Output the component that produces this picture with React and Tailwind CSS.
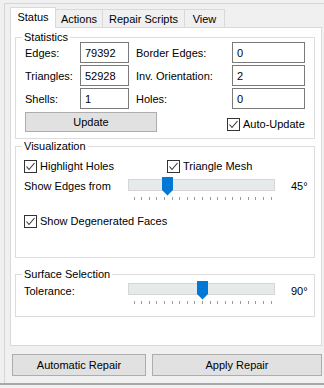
import React from "react";

function Check({ checked = true }) {
  return (
    <span className="w-[13px] h-[13px] border border-[#333333] bg-white flex items-center justify-center shrink-0">
      {checked && (
        <svg width="11" height="11" viewBox="0 0 11 11">
          <polyline points="1.5,5.5 4,8.5 9.5,2" fill="none" stroke="#333333" strokeWidth="1.1" />
        </svg>
      )}
    </span>
  );
}

function CheckRow({ label, className = "" }) {
  return (
    <label className={`flex items-center gap-[3px] h-[14px] ${className}`}>
      <Check />
      <span>{label}</span>
    </label>
  );
}

function Slider({ frac }) {
  const ticks = Array.from({ length: 19 }, (_, i) => 5.5 + (i * 137) / 18);
  const cx = 5.5 + frac * 137;
  const l = Math.round(cx - 5.5);
  return (
    <svg width="150" height="25" className="shrink-0">
      <rect x="0.5" y="2.5" width="146" height="11" fill="#e7eaea" stroke="#d6d6d6" />
      {ticks.map((x) => (
        <line key={x} x1={Math.round(x) + 0.5} x2={Math.round(x) + 0.5} y1="20" y2="23" stroke="#9a9a9a" />
      ))}
      <line x1="143.5" x2="143.5" y1="20" y2="23" stroke="#9a9a9a" />
      <path d={`M${l} 0 H${l + 11} V13 L${l + 5.5} 18.5 L${l} 13 Z`} fill="#0078d7" />
    </svg>
  );
}

function Field({ value, w }) {
  return (
    <div className={`${w} h-[21px] border border-[#7a7a7a] bg-white flex items-center pl-[4px]`}>{value}</div>
  );
}

function StatRow({ a, av, b, bv }) {
  return (
    <div className="flex items-center h-[21px] mb-[2px]">
      <span className="w-[55px]">{a}</span>
      <Field value={av} w="w-[49px]" />
      <span className="w-[96px] ml-[7px]">{b}</span>
      <Field value={bv} w="w-[73px]" />
    </div>
  );
}

function Group({ title, className = "", children }) {
  return (
    <fieldset className={`ml-[4px] w-[300px] border border-[#dcdcdc] ${className}`}>
      <legend className="ml-[6px] px-[2px] leading-[14px]">{title}</legend>
      {children}
    </fieldset>
  );
}

export default function App() {
  const tabs = [
    ["Actions", "w-[47px]"],
    ["Repair Scripts", "w-[82px]"],
    ["View", "w-[40px]"],
  ];

  return (
    <div className="w-[324px] h-[388px] bg-[#f0f0f0] font-['Liberation_Sans',Arial,sans-serif] text-[11px] leading-[14px] text-black flex flex-col overflow-hidden">
      <div className="ml-[4px] mt-[3px] h-[380px] border-l border-t border-[#d6d6d6] pl-[5px] pt-[3px] flex flex-col">
        <div className="flex items-end h-[21px] -mb-px relative z-10">
          <div className="w-[46px] h-[21px] bg-white border-x border-t border-[#d9d9d9] flex items-center justify-center pb-[2px]">
            Status
          </div>
          {tabs.map(([t, w]) => (
            <div
              key={t}
              className={`${w} h-[19px] bg-[#f0f0f0] border-t border-r border-[#d9d9d9] border-b flex items-center justify-center`}
            >
              {t}
            </div>
          ))}
        </div>

        <div className="w-[312px] h-[319px] bg-white border border-[#d9d9d9] pt-[2px]">
          <Group title="Statistics" className="pb-[6px]">
            <div className="pl-[9px] -mt-[2px]">
              <StatRow a="Edges:" av="79392" b="Border Edges:" bv="0" />
              <StatRow a="Triangles:" av="52928" b="Inv. Orientation:" bv="2" />
              <StatRow a="Shells:" av="1" b="Holes:" bv="0" />
              <div className="flex items-end mt-[3px]">
                <button className="w-[132px] h-[20px] bg-[#e1e1e1] border border-[#adadad]">Update</button>
                <CheckRow label="Auto-Update" className="ml-[70px] mb-[1px]" />
              </div>
            </div>
          </Group>

          <Group title="Visualization" className="pb-[29px]">
            <div className="pl-[8px] mt-[6px]">
              <div className="flex">
                <CheckRow label="Highlight Holes" className="w-[143px]" />
                <CheckRow label="Triangle Mesh" />
              </div>
              <div className="flex mt-[4px]">
                <span className="w-[104px] pt-[2px]">Show Edges from</span>
                <Slider frac={0.25} />
                <span className="ml-[13px] pt-[2px]">45°</span>
              </div>
              <CheckRow label="Show Degenerated Faces" className="mt-[12px]" />
            </div>
          </Group>

          <Group title="Surface Selection" className="mt-[9px] pb-[10px]">
            <div className="pl-[8px] flex">
              <span className="w-[104px] pt-[3px]">Tolerance:</span>
              <Slider frac={0.5} />
              <span className="ml-[13px] pt-[3px]">90°</span>
            </div>
          </Group>
        </div>

        <div className="flex gap-[6px] ml-[2px] mt-[8px]">
          <button className="w-[134px] h-[22px] bg-[#e1e1e1] border border-[#adadad]">Automatic Repair</button>
          <button className="w-[170px] h-[22px] bg-[#e1e1e1] border border-[#adadad]">Apply Repair</button>
        </div>
      </div>
      <div className="h-[2px] bg-[#a8a8a8]" />
    </div>
  );
}
